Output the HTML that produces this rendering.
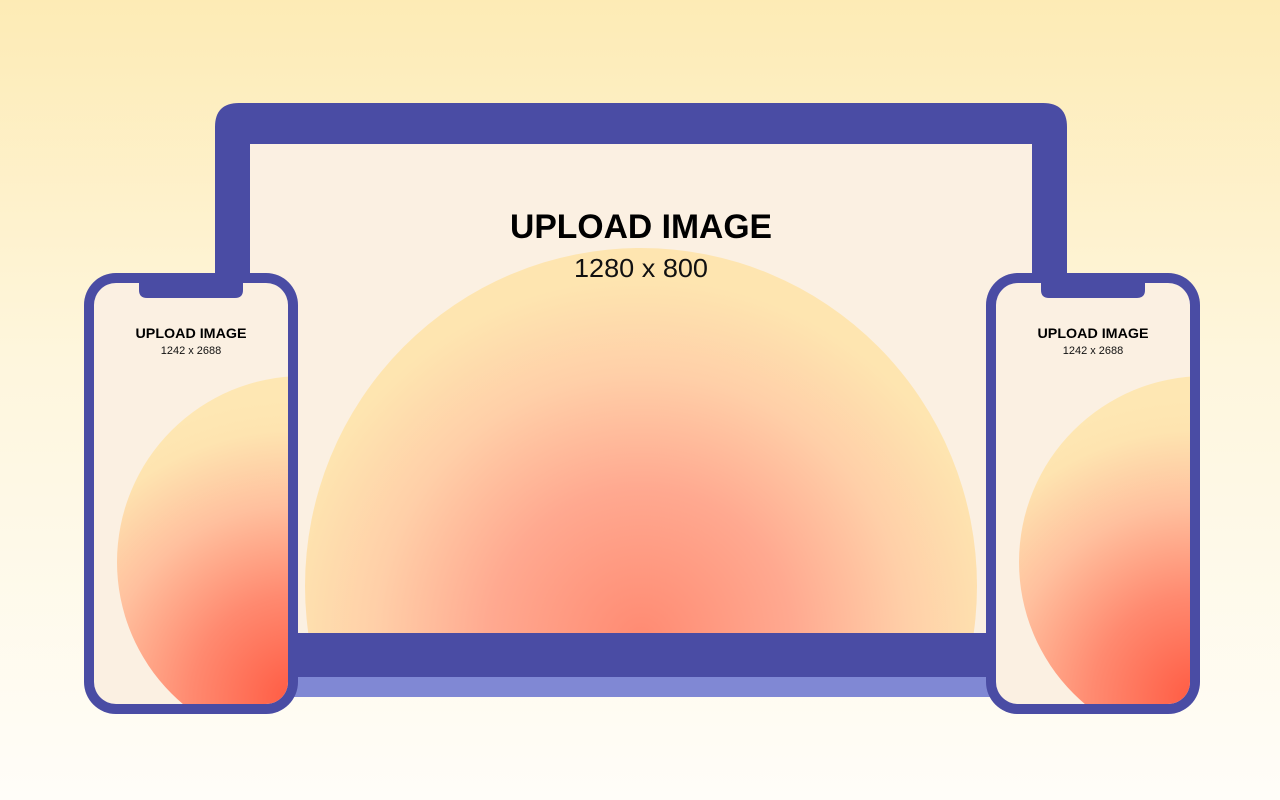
<!DOCTYPE html>
<html><head><meta charset="utf-8"><style>
html,body{margin:0;padding:0;width:1280px;height:800px;overflow:hidden}
body{background:linear-gradient(180deg,#fdebb5 0%,#fef6dd 45%,#fffdf8 100%)}
svg{display:block}
text{font-family:"Liberation Sans",sans-serif}
</style></head><body>
<svg width="1280" height="800" viewBox="0 0 1280 800" xmlns="http://www.w3.org/2000/svg">
<defs>
<radialGradient id="lg" gradientUnits="userSpaceOnUse" cx="641" cy="640" r="380">
<stop offset="0" stop-color="#ff8a72"/>
<stop offset="0.4" stop-color="#ffa990"/>
<stop offset="0.7" stop-color="#ffcfa8"/>
<stop offset="0.95" stop-color="#fee5b0"/>
</radialGradient>
<radialGradient id="pg" gradientUnits="userSpaceOnUse" cx="295" cy="700" r="300">
<stop offset="0" stop-color="#ff5a42"/>
<stop offset="0.35" stop-color="#ff8a70"/>
<stop offset="0.65" stop-color="#ffc09e"/>
<stop offset="0.9" stop-color="#fee4b0"/>
<stop offset="1" stop-color="#fee7b3"/>
</radialGradient>
<radialGradient id="pg2" gradientUnits="userSpaceOnUse" cx="1197" cy="700" r="300">
<stop offset="0" stop-color="#ff5a42"/>
<stop offset="0.35" stop-color="#ff8a70"/>
<stop offset="0.65" stop-color="#ffc09e"/>
<stop offset="0.9" stop-color="#fee4b0"/>
<stop offset="1" stop-color="#fee7b3"/>
</radialGradient>
<clipPath id="ls"><rect x="250" y="144" width="782" height="489"/></clipPath>
<clipPath id="p1"><rect x="94" y="283" width="194" height="421" rx="22"/></clipPath>
<clipPath id="p2"><rect x="996" y="283" width="194" height="421" rx="22"/></clipPath>
</defs>
<rect x="290" y="660" width="702" height="37" fill="#8088d4"/>
<path d="M239 103 H1043 Q1067 103 1067 127 V677 H215 V127 Q215 103 239 103Z" fill="#4a4ca4"/>
<rect x="250" y="144" width="782" height="489" fill="#fbf0e2"/>
<g clip-path="url(#ls)">
<ellipse cx="641" cy="586" rx="336" ry="338" fill="url(#lg)"/>
</g>
<text x="641" y="238" text-anchor="middle" font-size="34" font-weight="bold" fill="#000" textLength="262" lengthAdjust="spacingAndGlyphs">UPLOAD IMAGE</text>
<text x="641" y="277" text-anchor="middle" font-size="26" fill="#111" textLength="134" lengthAdjust="spacingAndGlyphs">1280 x 800</text>
<rect x="84" y="273" width="214" height="441" rx="32" fill="#4a4ca4"/>
<rect x="94" y="283" width="194" height="421" rx="22" fill="#fbf0e2"/>
<g clip-path="url(#p1)"><circle cx="303" cy="562" r="186" fill="url(#pg)"/></g>
<path d="M139 283 H243 V290 Q243 298 235 298 H147 Q139 298 139 290Z" fill="#4a4ca4"/>
<text x="191" y="338" text-anchor="middle" font-size="14" font-weight="bold" fill="#000" textLength="111" lengthAdjust="spacingAndGlyphs">UPLOAD IMAGE</text>
<text x="191" y="354" text-anchor="middle" font-size="11" fill="#111">1242 x 2688</text>
<rect x="986" y="273" width="214" height="441" rx="32" fill="#4a4ca4"/>
<rect x="996" y="283" width="194" height="421" rx="22" fill="#fbf0e2"/>
<g clip-path="url(#p2)"><circle cx="1205" cy="562" r="186" fill="url(#pg2)"/></g>
<path d="M1041 283 H1145 V290 Q1145 298 1137 298 H1049 Q1041 298 1041 290Z" fill="#4a4ca4"/>
<text x="1093" y="338" text-anchor="middle" font-size="14" font-weight="bold" fill="#000" textLength="111" lengthAdjust="spacingAndGlyphs">UPLOAD IMAGE</text>
<text x="1093" y="354" text-anchor="middle" font-size="11" fill="#111">1242 x 2688</text>
</svg>
</body></html>
